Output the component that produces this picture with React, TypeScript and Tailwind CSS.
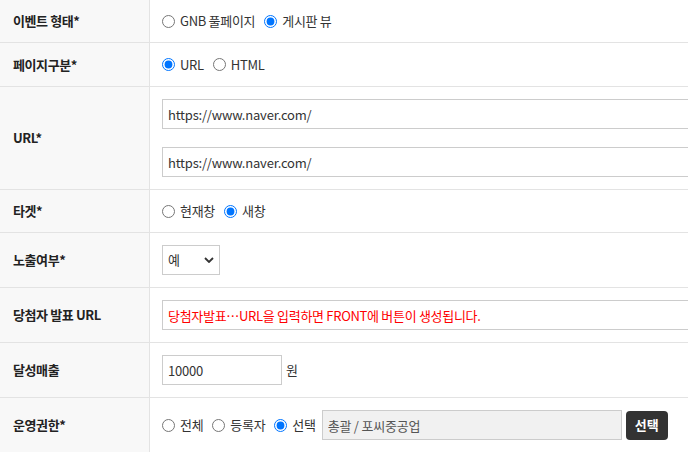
import { ReactNode } from 'react';

const font = { fontFamily: '"Noto Sans CJK KR", "Noto Sans", sans-serif' };

function Row({ label, children, h }: { label: string; children: ReactNode; h: string }) {
  return (
    <div className={`flex border-b border-[#e3e3e3] ${h}`}>
      <div className="w-[150px] shrink-0 border-r border-[#e3e3e3] bg-[#f8f8f8] pl-[13px] flex items-center text-[13px] font-bold text-[#222] tracking-[-0.4px]">
        {label}
      </div>
      <div className="flex-1 min-w-0 px-3 flex items-center">{children}</div>
    </div>
  );
}

function Radio({ label, checked, name, last }: { label: string; checked?: boolean; name: string; last?: boolean }) {
  return (
    <label className={`flex items-center text-[13px] text-[#333] tracking-[-0.3px] ${last ? 'mr-[6px]' : 'mr-[9px]'}`}>
      <input type="radio" name={name} defaultChecked={checked} className="m-0 w-[13px] h-[13px] mr-[5px]" />
      {label}
    </label>
  );
}

const inputCls =
  'shrink-0 h-[30px] border border-[#cccccc] bg-white px-[5px] text-[13px] text-[#333] outline-none tracking-[-0.2px]';

export default function App() {
  return (
    <div className="w-full overflow-hidden bg-white" style={font}>
      <Row label="이벤트 형태*" h="h-[43px]">
        <Radio name="type" label="GNB 풀페이지" />
        <Radio name="type" label="게시판 뷰" checked />
      </Row>
      <Row label="페이지구분*" h="h-[44px]">
        <Radio name="page" label="URL" checked />
        <Radio name="page" label="HTML" />
      </Row>
      <Row label="URL*" h="h-[103px]">
        <div className="flex flex-col gap-[18px] shrink-0">
          <input className={`${inputCls} w-[560px]`} defaultValue="https://www.naver.com/" />
          <input className={`${inputCls} w-[560px]`} defaultValue="https://www.naver.com/" />
        </div>
      </Row>
      <Row label="타겟*" h="h-[43px]">
        <Radio name="target" label="현재창" />
        <Radio name="target" label="새창" checked />
      </Row>
      <Row label="노출여부*" h="h-[55px]">
        <div className="relative w-[58px] h-[30px]">
          <select className="appearance-none w-full h-full border border-[#cccccc] bg-white pl-[5px] text-[13px] text-[#333] outline-none">
            <option>예</option>
            <option>아니오</option>
          </select>
          <svg className="absolute right-[6px] top-[12px] pointer-events-none" width="10" height="6" viewBox="0 0 10 6">
            <path d="M1 1l4 4 4-4" fill="none" stroke="#333" strokeWidth="1.8" />
          </svg>
        </div>
      </Row>
      <Row label="당첨자 발표 URL" h="h-[55px]">
        <input
          className={`${inputCls} w-[560px] h-[29px] !text-[#ff0000] !tracking-[-0.3px]`}
          defaultValue="당첨자발표…URL을 입력하면 FRONT에 버튼이 생성됩니다."
        />
      </Row>
      <Row label="달성매출" h="h-[55px]">
        <input className={`${inputCls} w-[120px]`} defaultValue="10000" />
        <span className="ml-[4px] text-[13px] text-[#333]">원</span>
      </Row>
      <Row label="운영권한*" h="h-[55px]">
        <Radio name="auth" label="전체" />
        <Radio name="auth" label="등록자" />
        <Radio name="auth" label="선택" checked last />
        <input
          readOnly
          className={`${inputCls} w-[300px] !bg-[#f1f1f1] !text-[#555]`}
          defaultValue="총괄 / 포씨중공업"
        />
        <button className="ml-[4px] shrink-0 h-[29px] w-[42px] rounded-[4px] bg-[#333333] text-white text-[13px] font-bold">
          선택
        </button>
      </Row>
    </div>
  );
}
